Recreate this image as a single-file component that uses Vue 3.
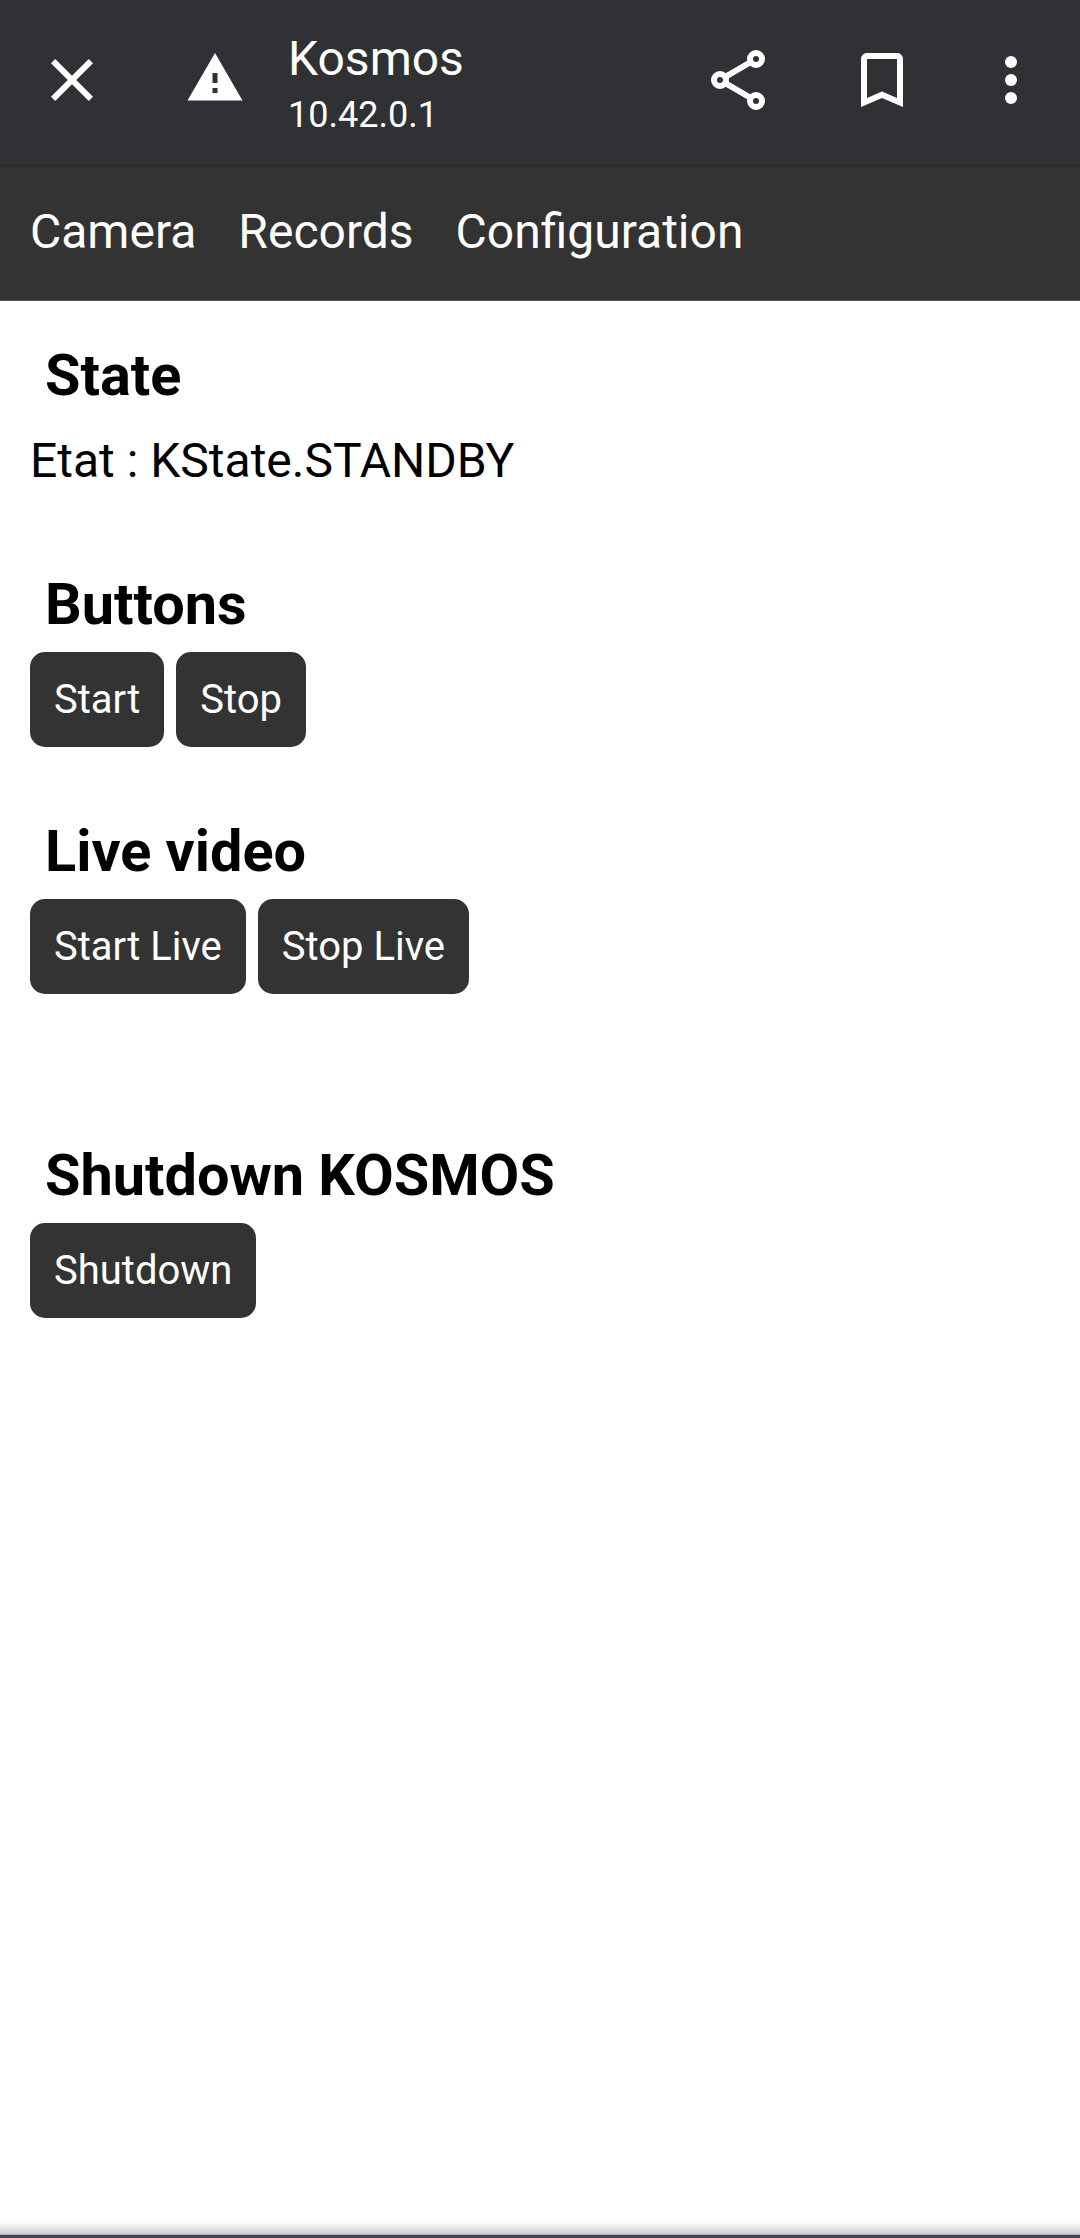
<script setup>
const links = ['Camera', 'Records', 'Configuration']
const groups = [
  { title: 'Buttons', key: 'buttons', actions: ['Start', 'Stop'] },
  { title: 'Live video', key: 'live', actions: ['Start Live', 'Stop Live'] },
  { title: 'Shutdown KOSMOS', key: 'shutdown', actions: ['Shutdown'] }
]
</script>

<template>
  <div class="screen">
    <header class="toolbar">
      <svg class="icon close" viewBox="0 0 24 24"><path d="M19 6.41L17.59 5 12 10.59 6.41 5 5 6.41 10.59 12 5 17.59 6.41 19 12 13.41 17.59 19 19 17.59 13.41 12z" /></svg>
      <svg class="warning" viewBox="0 0 24 24"><path d="M1 21h22L12 2 1 21zm12-3h-2v-2h2v2zm0-4h-2v-4h2v4z" /></svg>
      <div class="site">
        <div class="site-title">Kosmos</div>
        <div class="site-host">10.42.0.1</div>
      </div>
      <svg class="icon share" viewBox="0 0 24 24">
        <path class="line" d="M18 5L6 12l12 7" />
        <circle class="node" cx="18" cy="5" r="2" />
        <circle class="node" cx="6" cy="12" r="2" />
        <circle class="node" cx="18" cy="19" r="2" />
      </svg>
      <svg class="icon bookmark" viewBox="0 0 24 24"><path d="M17 3H7c-1.1 0-2 .9-2 2v16l7-3 7 3V5c0-1.1-.9-2-2-2zm0 15l-5-2.18L7 18V5h10v13z" /></svg>
      <svg class="icon more" viewBox="0 0 24 24"><circle cx="12" cy="6" r="2" /><circle cx="12" cy="12" r="2" /><circle cx="12" cy="18" r="2" /></svg>
    </header>

    <nav class="nav">
      <a v-for="link in links" :key="link">{{ link }}</a>
    </nav>

    <main class="content">
      <section class="state">
        <h2>State</h2>
        <p>Etat : KState.STANDBY</p>
      </section>
      <section v-for="group in groups" :key="group.key" :class="group.key">
        <h2>{{ group.title }}</h2>
        <div class="actions">
          <button v-for="action in group.actions" :key="action">{{ action }}</button>
        </div>
      </section>
    </main>

    <div class="shade"></div>
    <footer class="edge"></footer>
  </div>
</template>

<style>
body {
  margin: 0;
  background: #fff;
}
</style>

<style scoped>
.screen {
  box-sizing: border-box;
  width: 1080px;
  height: 2238px;
  display: flex;
  flex-direction: column;
  overflow: hidden;
  background: #fff;
  color: #000;
  font-family: Roboto, sans-serif;
}

.toolbar {
  box-sizing: border-box;
  flex: none;
  height: 167px;
  display: flex;
  align-items: flex-start;
  padding: 0 33px 0 36px;
  background: #303135;
  border-bottom: 3px solid #2c2c31;
  color: #fff;
}

.icon {
  flex: none;
  width: 72px;
  height: 72px;
  margin-top: 44px;
  fill: #fff;
}

.warning {
  flex: none;
  width: 60px;
  height: 60px;
  margin: 48px 0 0 77px;
  fill: #fff;
}

.site {
  flex: 1;
  margin-left: 43px;
  padding-top: 29px;
}

.site-title {
  font-size: 48px;
  line-height: 60px;
}

.site-host {
  margin-top: 2px;
  font-size: 36px;
  line-height: 48px;
}

.share .line,
.share .node {
  fill: none;
  stroke: #fff;
  stroke-width: 2;
}

.share .node {
  fill: #303135;
}

.bookmark {
  margin-left: 72px;
}

.more {
  margin-left: 57px;
}

.nav {
  box-sizing: border-box;
  flex: none;
  height: 134px;
  display: flex;
  gap: 42px;
  padding: 37px 30px 0;
  background: #333;
  border-bottom: 1px solid #5c5a5c;
  color: #fff;
  font-size: 48px;
  line-height: 56px;
}

.content {
  flex: 1;
  padding: 41px 30px 0;
}

h2 {
  margin: 0 0 0 15px;
  font-size: 57.6px;
  font-weight: 700;
  line-height: 68px;
}

p {
  margin: 23px 0 0;
  font-size: 48px;
  line-height: 56px;
}

.buttons {
  margin-top: 82px;
}

.live {
  margin-top: 71px;
}

.shutdown {
  margin-top: 148px;
}

.actions {
  display: flex;
  gap: 12px;
  margin-top: 13px;
}

button {
  height: 95px;
  padding: 0 24px;
  border: 0;
  border-radius: 15px;
  background: #333;
  color: #fff;
  font-family: inherit;
  font-size: 40px;
  line-height: 47px;
}

.shade {
  flex: none;
  height: 12px;
  background: linear-gradient(#fff, #cecece);
  border-bottom: 1px solid #b0b0b0;
}

.edge {
  flex: none;
  height: 3px;
  background: #43444c;
}
</style>
